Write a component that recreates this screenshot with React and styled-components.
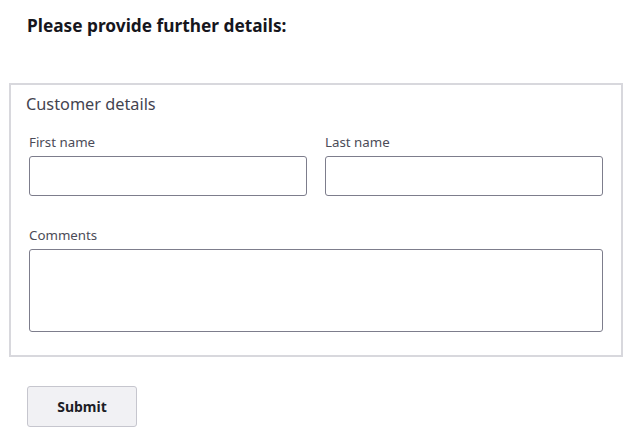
import React from 'react';
import styled, { createGlobalStyle } from 'styled-components';

const GlobalStyle = createGlobalStyle`
  body {
    margin: 0;
    background: #ffffff;
    font-family: "Noto Sans", "Liberation Sans", sans-serif;
    color: #1d1d26;
  }
`;

const Page = styled.div`
  padding: 14px 16px 0 9px;
  width: 614px;
`;

const Heading = styled.h1`
  margin: 0 0 45px 18px;
  font-size: 17.3px;
  line-height: 24px;
  font-weight: 700;
  color: #16161d;
`;

const Fieldset = styled.fieldset`
  margin: 0;
  border: 2px solid #d8d8dd;
  padding: 8px 18px 23px;
  min-width: 0;
`;

const Legend = styled.div`
  margin: 0 0 18px -3px;
  font-size: 16.3px;
  line-height: 22px;
  color: #43434f;
`;

const Row = styled.div`
  display: grid;
  grid-template-columns: 1fr 1fr;
  column-gap: 18px;
  margin-bottom: 30px;
`;

const Field = styled.div`
  display: flex;
  flex-direction: column;
`;

const Label = styled.label`
  font-size: 13.3px;
  line-height: 18px;
  color: #4b4b57;
  margin-bottom: 5px;
`;

const TextInput = styled.input`
  box-sizing: border-box;
  height: 40px;
  width: 100%;
  border: 1px solid #7d7d8c;
  border-radius: 3px;
  padding: 0 10px;
  font: inherit;
  background: #ffffff;
`;

const TextArea = styled.textarea`
  box-sizing: border-box;
  height: 83px;
  width: 100%;
  border: 1px solid #7d7d8c;
  border-radius: 3px;
  padding: 8px 10px;
  font: inherit;
  resize: none;
  display: block;
`;

const SubmitButton = styled.button`
  margin: 29px 0 0 18px;
  width: 110px;
  height: 41px;
  background: #f1f1f4;
  border: 1px solid #c6c6ce;
  border-radius: 3px;
  font-family: inherit;
  font-size: 14px;
  font-weight: 700;
  color: #1d1d26;
  cursor: pointer;
`;

export default function App() {
  return (
    <>
      <GlobalStyle />
      <Page>
        <Heading>Please provide further details:</Heading>
        <Fieldset>
          <Legend>Customer details</Legend>
          <Row>
            <Field>
              <Label htmlFor="first">First name</Label>
              <TextInput id="first" type="text" />
            </Field>
            <Field>
              <Label htmlFor="last">Last name</Label>
              <TextInput id="last" type="text" />
            </Field>
          </Row>
          <Field>
            <Label htmlFor="comments">Comments</Label>
            <TextArea id="comments" />
          </Field>
        </Fieldset>
        <SubmitButton type="button">Submit</SubmitButton>
      </Page>
    </>
  );
}
